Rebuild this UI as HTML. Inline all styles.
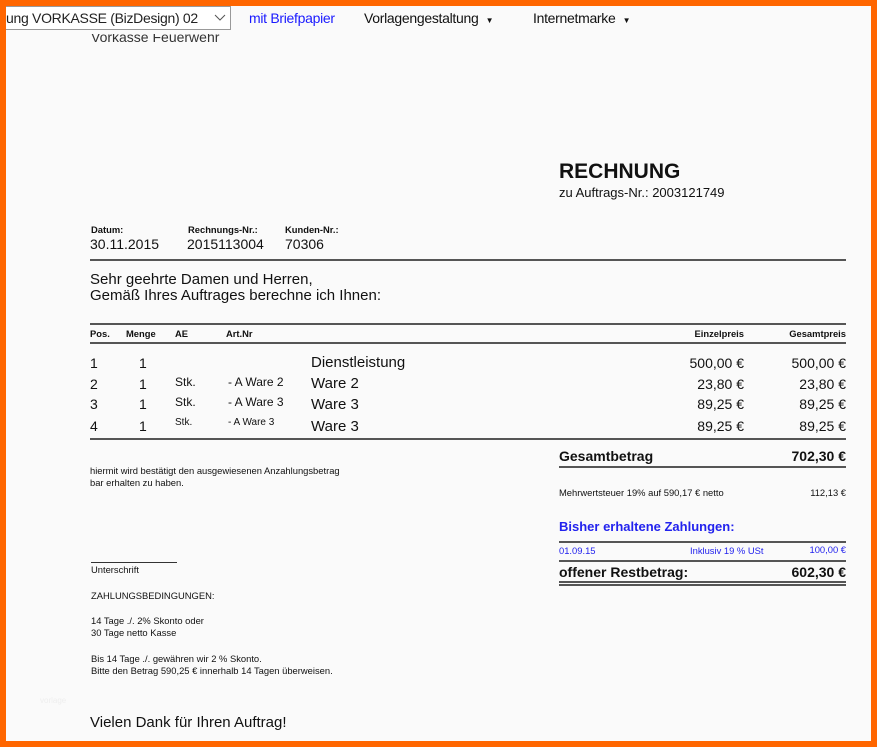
<!DOCTYPE html>
<html><head><meta charset="utf-8"><style>
*{margin:0;padding:0;box-sizing:border-box}
body{width:877px;height:747px;background:#ff6600;position:relative;overflow:hidden;font-family:"Liberation Sans",Arial,sans-serif;color:#111}
#pg{position:absolute;left:6px;top:6px;width:865px;height:735px;background:#fafafa;overflow:hidden}
.t{position:absolute;white-space:nowrap;line-height:1}
.r{text-align:right}
.hl{position:absolute;height:0;border-top:1px solid #333}
.hl2{position:absolute;height:0;border-top:2px solid #555}
.s{font-size:9.4px}
</style></head><body><div id="pg">
<div class="t" style="left:85px;top:24px;font-size:14px;color:#333">Vorkasse Feuerwehr</div>
<div style="position:absolute;left:0;top:0;width:865px;height:28px;background:#fafafa"></div>
<div style="position:absolute;left:-2px;top:0;width:227px;height:24px;background:#fff;border:1px solid #999"></div>
<div class="t" style="left:0;top:5px;font-size:14px;color:#222;letter-spacing:-0.3px">ung VORKASSE (BizDesign) 02</div>
<svg style="position:absolute;left:208px;top:8px" width="12" height="8"><path d="M1 1L6 6L11 1" stroke="#555" fill="none"/></svg>
<div class="t" style="left:243px;top:5px;font-size:14px;color:#1a1aff;letter-spacing:-0.3px">mit Briefpapier</div>
<div class="t" style="left:358px;top:5px;font-size:14px;letter-spacing:-0.3px">Vorlagengestaltung &nbsp;<span style="font-size:8px">▼</span></div>
<div class="t" style="left:527px;top:5px;font-size:14px;letter-spacing:-0.3px">Internetmarke &nbsp;<span style="font-size:8px">▼</span></div>

<div class="t" style="left:553px;top:155px;font-size:21px;font-weight:bold">RECHNUNG</div>
<div class="t" style="left:553px;top:180px;font-size:13px">zu Auftrags-Nr.: 2003121749</div>

<div class="t s" style="left:85px;top:219px;font-weight:bold">Datum:</div>
<div class="t s" style="left:182px;top:219px;font-weight:bold">Rechnungs-Nr.:</div>
<div class="t s" style="left:279px;top:219px;font-weight:bold">Kunden-Nr.:</div>
<div class="t" style="left:84px;top:231px;font-size:14px">30.11.2015</div>
<div class="t" style="left:181px;top:231px;font-size:14px">2015113004</div>
<div class="t" style="left:279px;top:231px;font-size:14px">70306</div>
<div class="hl2" style="left:84px;top:253px;width:756px"></div>

<div class="t" style="left:84px;top:266px;font-size:15px;line-height:16px">Sehr geehrte Damen und Herren,<br>Gemäß Ihres Auftrages berechne ich Ihnen:</div>

<div class="hl2" style="left:84px;top:317px;width:756px"></div>
<div class="t s" style="left:84px;top:323px;font-weight:bold">Pos.</div>
<div class="t s" style="left:120px;top:323px;font-weight:bold">Menge</div>
<div class="t s" style="left:169px;top:323px;font-weight:bold">AE</div>
<div class="t s" style="left:220px;top:323px;font-weight:bold">Art.Nr</div>
<div class="t r s" style="left:640px;width:98px;top:323px;font-weight:bold">Einzelpreis</div>
<div class="t r s" style="left:740px;width:100px;top:323px;font-weight:bold">Gesamtpreis</div>
<div class="hl2" style="left:84px;top:336px;width:756px"></div>

<div class="t" style="left:84px;top:350px;font-size:14px">1</div>
<div class="t" style="left:133px;top:350px;font-size:14px">1</div>
<div class="t" style="left:305px;top:349px;font-size:15px">Dienstleistung</div>
<div class="t r" style="left:600px;width:138px;top:350px;font-size:14px">500,00 €</div>
<div class="t r" style="left:700px;width:140px;top:350px;font-size:14px">500,00 €</div>

<div class="t" style="left:84px;top:371px;font-size:14px">2</div>
<div class="t" style="left:133px;top:371px;font-size:14px">1</div>
<div class="t" style="left:169px;top:370px;font-size:12px">Stk.</div>
<div class="t" style="left:222px;top:370px;font-size:12px">- A Ware 2</div>
<div class="t" style="left:305px;top:370px;font-size:15px">Ware 2</div>
<div class="t r" style="left:600px;width:138px;top:371px;font-size:14px">23,80 €</div>
<div class="t r" style="left:700px;width:140px;top:371px;font-size:14px">23,80 €</div>

<div class="t" style="left:84px;top:391px;font-size:14px">3</div>
<div class="t" style="left:133px;top:391px;font-size:14px">1</div>
<div class="t" style="left:169px;top:390px;font-size:12px">Stk.</div>
<div class="t" style="left:222px;top:390px;font-size:12px">- A Ware 3</div>
<div class="t" style="left:305px;top:391px;font-size:15px">Ware 3</div>
<div class="t r" style="left:600px;width:138px;top:391px;font-size:14px">89,25 €</div>
<div class="t r" style="left:700px;width:140px;top:391px;font-size:14px">89,25 €</div>

<div class="t" style="left:84px;top:413px;font-size:14px">4</div>
<div class="t" style="left:133px;top:413px;font-size:14px">1</div>
<div class="t" style="left:169px;top:412px;font-size:10px">Stk.</div>
<div class="t" style="left:222px;top:412px;font-size:10px">- A Ware 3</div>
<div class="t" style="left:305px;top:413px;font-size:15px">Ware 3</div>
<div class="t r" style="left:600px;width:138px;top:413px;font-size:14px">89,25 €</div>
<div class="t r" style="left:700px;width:140px;top:413px;font-size:14px">89,25 €</div>
<div class="hl2" style="left:84px;top:432px;width:756px"></div>

<div class="t s" style="left:84px;top:459px;line-height:12px">hiermit wird bestätigt den ausgewiesenen Anzahlungsbetrag<br>bar erhalten zu haben.</div>

<div class="t" style="left:553px;top:443px;font-size:14px;font-weight:bold">Gesamtbetrag</div>
<div class="t r" style="left:700px;width:140px;top:443px;font-size:14px;font-weight:bold">702,30 €</div>
<div class="hl2" style="left:553px;top:460px;width:287px"></div>
<div class="t s" style="left:553px;top:482px">Mehrwertsteuer 19% auf 590,17 € netto</div>
<div class="t r s" style="left:740px;width:100px;top:482px">112,13 €</div>
<div class="t" style="left:553px;top:514px;font-size:13px;font-weight:bold;color:#2222ee">Bisher erhaltene Zahlungen:</div>
<div class="hl2" style="left:553px;top:535px;width:287px"></div>
<div class="t s" style="left:553px;top:540px;color:#2222ee">01.09.15</div>
<div class="t s" style="left:684px;top:540px;color:#2222ee">Inklusiv 19 % USt</div>
<div class="t r s" style="left:740px;width:100px;top:539px;color:#2222ee">100,00 €</div>
<div class="hl2" style="left:553px;top:554px;width:287px"></div>
<div class="t" style="left:553px;top:559px;font-size:14px;font-weight:bold">offener Restbetrag:</div>
<div class="t r" style="left:700px;width:140px;top:559px;font-size:14px;font-weight:bold">602,30 €</div>
<div class="hl2" style="left:553px;top:575px;width:287px"></div>
<div class="hl2" style="left:553px;top:578px;width:287px"></div>

<div class="hl" style="left:85px;top:556px;width:86px"></div>
<div class="t s" style="left:85px;top:559px">Unterschrift</div>
<div class="t s" style="left:85px;top:585px">ZAHLUNGSBEDINGUNGEN:</div>
<div class="t s" style="left:85px;top:609px;line-height:12px">14 Tage ./. 2% Skonto oder<br>30 Tage netto Kasse</div>
<div class="t s" style="left:85px;top:647px;line-height:12px">Bis 14 Tage ./. gewähren wir 2 % Skonto.<br>Bitte den Betrag 590,25 € innerhalb 14 Tagen überweisen.</div>
<div class="t" style="left:34px;top:691px;font-size:8px;color:#eee">vorlage</div>
<div class="t" style="left:84px;top:709px;font-size:15px">Vielen Dank für Ihren Auftrag!</div>
</div></body></html>
